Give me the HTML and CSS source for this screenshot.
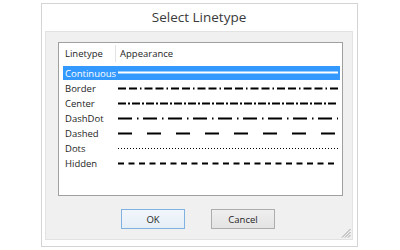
FILE: index.html
```html
<!DOCTYPE html>
<html>
<head>
<meta charset="utf-8">
<link rel="stylesheet" href="styles.css">
</head>
<body>
<div class="dialog">
  <div class="title">Select Linetype</div>
  <div class="panel">
    <div class="list">
      <div class="head">
        <span class="hcol1">Linetype</span>
        <span class="hsep"></span>
        <span class="hcol2">Appearance</span>
      </div>
      <div class="row sel">
        <span class="name">Continuous</span>
        <svg class="lt" width="220" height="15"><line x1="0" y1="6.5" x2="220" y2="6.5" stroke="#fff" stroke-width="2"/></svg>
      </div>
      <div class="row">
        <span class="name">Border</span>
        <svg class="lt" width="220" height="15"><line x1="0" y1="7.5" x2="220" y2="7.5" stroke="#000" stroke-width="1.8" stroke-dasharray="8 3 8 3 1.5 3"/></svg>
      </div>
      <div class="row">
        <span class="name">Center</span>
        <svg class="lt" width="220" height="15"><line x1="0" y1="7.5" x2="220" y2="7.5" stroke="#000" stroke-width="1.8" stroke-dasharray="8 2 2 2"/></svg>
      </div>
      <div class="row">
        <span class="name">DashDot</span>
        <svg class="lt" width="220" height="15"><line x1="0" y1="7.5" x2="220" y2="7.5" stroke="#000" stroke-width="1.8" stroke-dasharray="14 5 1.5 4.5"/></svg>
      </div>
      <div class="row">
        <span class="name">Dashed</span>
        <svg class="lt" width="220" height="15"><line x1="0" y1="7.5" x2="220" y2="7.5" stroke="#000" stroke-width="1.8" stroke-dasharray="14 15"/></svg>
      </div>
      <div class="row">
        <span class="name">Dots</span>
        <svg class="lt" width="220" height="15"><line x1="0" y1="7.5" x2="220" y2="7.5" stroke="#000" stroke-width="1" stroke-dasharray="1 2"/></svg>
      </div>
      <div class="row">
        <span class="name">Hidden</span>
        <svg class="lt" width="220" height="15"><line x1="0" y1="7.5" x2="220" y2="7.5" stroke="#000" stroke-width="1.8" stroke-dasharray="6 4.5"/></svg>
      </div>
    </div>
    <div class="buttons">
      <button class="btn ok">OK</button>
      <button class="btn">Cancel</button>
    </div>
    <svg class="grip" width="10" height="10" viewBox="0 0 10 10">
      <line x1="9.5" y1="1" x2="1" y2="9.5" stroke="#a0a0a0" stroke-width="1"/>
      <line x1="9.5" y1="4" x2="4" y2="9.5" stroke="#a0a0a0" stroke-width="1"/>
      <line x1="9.5" y1="7" x2="7" y2="9.5" stroke="#a0a0a0" stroke-width="1"/>
    </svg>
  </div>
</div>
</body>
</html>
```

FILE: styles.css
```css
html, body {
  margin: 0;
  padding: 0;
  background: #fff;
}
body {
  width: 400px;
  height: 250px;
  overflow: hidden;
  font-family: "Open Sans", "Noto Sans", sans-serif;
}
.dialog {
  box-sizing: border-box;
  margin: 3px 0 0 41px;
  width: 317px;
  height: 244px;
  border: 1px solid #d4d4d4;
  background: #fff;
  padding: 0 4px 6px 3px;
  display: flex;
  flex-direction: column;
}
.title {
  height: 27px;
  line-height: 27px;
  text-align: center;
  font-size: 13.5px;
  color: #3a3a3a;
}
.panel {
  position: relative;
  flex: 1;
  background: #f0f0f0;
  border: 1px solid #e2e2e2;
  box-sizing: border-box;
  padding: 10px 9px 0 12px;
  display: flex;
  flex-direction: column;
}
.list {
  box-sizing: border-box;
  height: 154px;
  background: #fff;
  border: 1px solid #a0a0a0;
  padding: 0 2px 0 4px;
  font-size: 9.5px;
  color: #1e1e1e;
}
.head {
  height: 20px;
  display: flex;
  align-items: center;
  margin-bottom: 3px;
}
.hcol1 {
  width: 52px;
  padding-left: 2px;
  box-sizing: border-box;
}
.hsep {
  width: 1px;
  height: 17px;
  background: #e3e3e3;
}
.hcol2 {
  padding-left: 4px;
}
.row {
  height: 15px;
  display: flex;
  align-items: center;
}
.row.sel {
  background: #3399ff;
  color: #fff;
  height: 14px;
  margin-bottom: 1px;
}
.name {
  width: 55px;
  padding-left: 2px;
  box-sizing: border-box;
  white-space: nowrap;
}
.lt {
  display: block;
}
.buttons {
  display: flex;
  justify-content: center;
  gap: 26px;
  margin-top: 13px;
  padding-right: 5px;
}
.btn {
  box-sizing: border-box;
  width: 64px;
  height: 20px;
  font-family: "Open Sans", "Noto Sans", sans-serif;
  font-size: 9.5px;
  color: #1e1e1e;
  border: 1px solid #adadad;
  background: linear-gradient(#efefef, #e3e3e3);
  padding: 0;
}
.btn.ok {
  border-color: #7fb2e0;
  background: linear-gradient(#f1f6fb, #e6eef6);
}
.grip {
  position: absolute;
  right: 1px;
  bottom: 1px;
}
```
